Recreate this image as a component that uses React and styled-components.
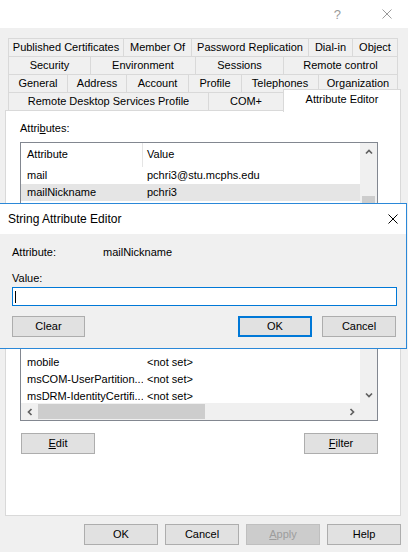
import React from 'react'
import styled, { createGlobalStyle } from 'styled-components'

const GlobalStyle = createGlobalStyle`
  html, body {
    margin: 0;
    padding: 0;
    background: #f0f0f0;
  }
  body {
    font-family: "Liberation Sans", Arial, sans-serif;
    font-size: 11px;
    color: #000;
  }
`

const Window = styled.div`
  position: relative;
  width: 408px;
  height: 552px;
  background: #f0f0f0;
  overflow: hidden;
  display: flex;
  flex-direction: column;
`

const TitleBar = styled.div`
  height: 28px;
  background: #fff;
  display: flex;
  justify-content: flex-end;
  align-items: center;
  gap: 41px;
  padding-right: 16px;
`

const HelpGlyph = styled.span`
  font-size: 13px;
  color: #9a9a9a;
  line-height: 1;
`

const TabStrip = styled.div`
  margin-top: 10px;
  padding-left: 8px;
  display: flex;
  flex-direction: column;
`

const TabRow = styled.div`
  display: flex;
  align-items: flex-end;
  height: 19px;
  & + & {
    margin-top: -1px;
  }
`

const Tab = styled.div`
  box-sizing: border-box;
  width: ${p => p.$w}px;
  height: ${p => (p.$active ? 23 : 19)}px;
  border: 1px solid #d9d9d9;
  background: ${p => (p.$active ? '#fff' : '#f0f0f0')};
  text-align: center;
  line-height: 17px;
  white-space: nowrap;
  ${p =>
    p.$active &&
    `
    position: relative;
    z-index: 1;
    border-bottom: none;
    margin-bottom: -1px;
    line-height: 19px;
  `}
  & + & {
    margin-left: -1px;
  }
`

const Panel = styled.div`
  box-sizing: border-box;
  margin: -1px 7px 0 5px;
  height: 406px;
  background: #fff;
  border: 1px solid #d9d9d9;
  padding: 10px 0 0 14px;
`

const Label = styled.div`
  line-height: 14px;
`

const ListBox = styled.div`
  box-sizing: border-box;
  margin-top: 7px;
  width: 358px;
  height: 279px;
  border: 1px solid #828790;
  display: grid;
  grid-template-columns: 1fr 17px;
  grid-template-rows: 1fr 17px;
  overflow: hidden;
`

const ListContent = styled.div`
  overflow: hidden;
`

const HeaderRow = styled.div`
  display: grid;
  grid-template-columns: 122px 1fr;
  height: 24px;
  line-height: 22px;
`

const HeaderCell = styled.div`
  box-sizing: border-box;
  padding-left: ${p => p.$pad}px;
  border-right: ${p => (p.$divider ? '1px solid #e5e5e5' : 'none')};
`

const Row = styled.div`
  display: grid;
  grid-template-columns: 122px 1fr;
  height: 17px;
  line-height: 17px;
  background: ${p => (p.$selected ? '#e5e5e5' : 'transparent')};
`

const Cell = styled.div`
  padding-left: ${p => p.$pad}px;
  white-space: nowrap;
  overflow: hidden;
`

const VScroll = styled.div`
  background: #f0f0f0;
  display: flex;
  flex-direction: column;
`

const HScroll = styled.div`
  background: #f0f0f0;
  display: flex;
`

const ArrowBox = styled.div`
  width: 17px;
  height: 17px;
  flex: none;
  display: flex;
  align-items: center;
  justify-content: center;
`

const VTrack = styled.div`
  flex: 1;
  padding: 36px 2px 0;
`

const VThumb = styled.div`
  height: 48px;
  background: #cdcdcd;
`

const HTrack = styled.div`
  flex: 1;
  padding: 1px 0;
`

const HThumb = styled.div`
  width: 167px;
  height: 100%;
  background: #cdcdcd;
`

const Corner = styled.div`
  background: #f0f0f0;
`

const ButtonRow = styled.div`
  display: flex;
  justify-content: ${p => p.$justify || 'space-between'};
  gap: ${p => p.$gap || 0}px;
  margin-top: ${p => p.$top || 0}px;
  padding: 0 ${p => p.$right || 0}px 0 ${p => p.$left || 0}px;
  width: ${p => (p.$width ? `${p.$width}px` : 'auto')};
`

const Button = styled.div`
  box-sizing: border-box;
  width: ${p => p.$w || 74}px;
  height: 21px;
  line-height: ${p => (p.$default ? 17 : 19)}px;
  text-align: center;
  font-size: 11px;
  background: ${p => (p.$disabled ? '#cccccc' : '#e1e1e1')};
  color: ${p => (p.$disabled ? '#9d9d9d' : '#000')};
  border: ${p =>
    p.$default ? '2px solid #0078d7' : p.$disabled ? '1px solid #bfbfbf' : '1px solid #adadad'};
`

const Spacer = styled.div`
  flex: 1;
`

/* String Attribute Editor popup window */
const Dialog = styled.div`
  position: absolute;
  left: -1px;
  top: 203px;
  box-sizing: border-box;
  width: 408px;
  height: 146px;
  border: 1px solid #2b88d8;
  background: #f0f0f0;
  display: flex;
  flex-direction: column;
  z-index: 5;
`

const DialogTitle = styled.div`
  height: 30px;
  background: #fff;
  display: flex;
  align-items: center;
  justify-content: space-between;
  padding: 0 8px;
  font-size: 12px;
`

const DialogBody = styled.div`
  flex: 1;
  padding: 11px 9px 0 12px;
`

const InfoRow = styled.div`
  display: flex;
  line-height: 14px;
`

const InfoLabel = styled.div`
  width: 91px;
`

const ValueLabel = styled.div`
  margin-top: 12px;
  line-height: 14px;
`

const TextField = styled.div`
  box-sizing: border-box;
  margin-top: 2px;
  width: 385px;
  height: 19px;
  background: #fff;
  border: 1px solid #0078d7;
  display: flex;
  align-items: center;
  padding-left: 2px;
`

const Caret = styled.span`
  width: 1px;
  height: 12px;
  background: #000;
`

const Chevron = ({ dir }) => {
  const d = {
    up: 'M1 5.5 L4 2.5 L7 5.5',
    down: 'M1 2.5 L4 5.5 L7 2.5',
    left: 'M5.5 1 L2.5 4 L5.5 7',
    right: 'M2.5 1 L5.5 4 L2.5 7',
  }[dir]
  return (
    <svg width="8" height="8" viewBox="0 0 8 8">
      <path d={d} fill="none" stroke="#606060" strokeWidth="1.7" />
    </svg>
  )
}

const CloseIcon = ({ color, size = 10 }) => (
  <svg width={size} height={size} viewBox="0 0 10 10">
    <path d="M0.5 0.5 L9.5 9.5 M9.5 0.5 L0.5 9.5" stroke={color} strokeWidth="1" fill="none" />
  </svg>
)

const tabRows = [
  [['Published Certificates', 116], ['Member Of', 69], ['Password Replication', 118], ['Dial-in', 45], ['Object', 46]],
  [['Security', 83], ['Environment', 106], ['Sessions', 89], ['Remote control', 115]],
  [['General', 60], ['Address', 60], ['Account', 63], ['Profile', 54], ['Telephones', 78], ['Organization', 80]],
  [['Remote Desktop Services Profile', 201], ['COM+', 76], ['Attribute Editor', 118, true]],
]

// rows hidden behind the popup are left blank
const rows = [
  ['mail', 'pchri3@stu.mcphs.edu'],
  ['mailNickname', 'pchri3', true],
  ['', ''],
  ['', ''],
  ['', ''],
  ['', ''],
  ['', ''],
  ['', ''],
  ['', ''],
  ['', ''],
  ['middleName', '<not set>'],
  ['mobile', '<not set>'],
  ['msCOM-UserPartition...', '<not set>'],
  ['msDRM-IdentityCertifi...', '<not set>'],
]

export default function App() {
  return (
    <Window>
      <GlobalStyle />
      <TitleBar>
        <HelpGlyph>?</HelpGlyph>
        <CloseIcon color="#9a9a9a" />
      </TitleBar>

      <TabStrip>
        {tabRows.map((r, i) => (
          <TabRow key={i}>
            {r.map(([name, w, active]) => (
              <Tab key={name} $w={w} $active={active}>
                {name}
              </Tab>
            ))}
          </TabRow>
        ))}
      </TabStrip>

      <Panel>
        <Label>
          Attri<u>b</u>utes:
        </Label>
        <ListBox>
          <ListContent>
            <HeaderRow>
              <HeaderCell $pad={6} $divider>
                Attribute
              </HeaderCell>
              <HeaderCell $pad={4}>Value</HeaderCell>
            </HeaderRow>
            {rows.map(([a, v, sel], i) => (
              <Row key={i} $selected={sel}>
                <Cell $pad={6}>{a}</Cell>
                <Cell $pad={4}>{v}</Cell>
              </Row>
            ))}
          </ListContent>
          <VScroll>
            <ArrowBox>
              <Chevron dir="up" />
            </ArrowBox>
            <VTrack>
              <VThumb />
            </VTrack>
            <ArrowBox>
              <Chevron dir="down" />
            </ArrowBox>
          </VScroll>
          <HScroll>
            <ArrowBox>
              <Chevron dir="left" />
            </ArrowBox>
            <HTrack>
              <HThumb />
            </HTrack>
            <ArrowBox>
              <Chevron dir="right" />
            </ArrowBox>
          </HScroll>
          <Corner />
        </ListBox>
        <ButtonRow $top={12} $left={1} $width={357}>
          <Button>
            <u>E</u>dit
          </Button>
          <Button>
            <u>F</u>ilter
          </Button>
        </ButtonRow>
      </Panel>

      <ButtonRow $top={8} $justify="flex-end" $gap={7} $right={7}>
        <Button>OK</Button>
        <Button>Cancel</Button>
        <Button $disabled>
          <u>A</u>pply
        </Button>
        <Button>Help</Button>
      </ButtonRow>

      <Dialog>
        <DialogTitle>
          <span>String Attribute Editor</span>
          <CloseIcon color="#000" />
        </DialogTitle>
        <DialogBody>
          <InfoRow>
            <InfoLabel>Attribute:</InfoLabel>
            <span>mailNickname</span>
          </InfoRow>
          <ValueLabel>Value:</ValueLabel>
          <TextField>
            <Caret />
          </TextField>
          <ButtonRow $top={10} $gap={10} $right={1}>
            <Button $w={73}>Clear</Button>
            <Spacer />
            <Button $default>OK</Button>
            <Button>Cancel</Button>
          </ButtonRow>
        </DialogBody>
      </Dialog>
    </Window>
  )
}
